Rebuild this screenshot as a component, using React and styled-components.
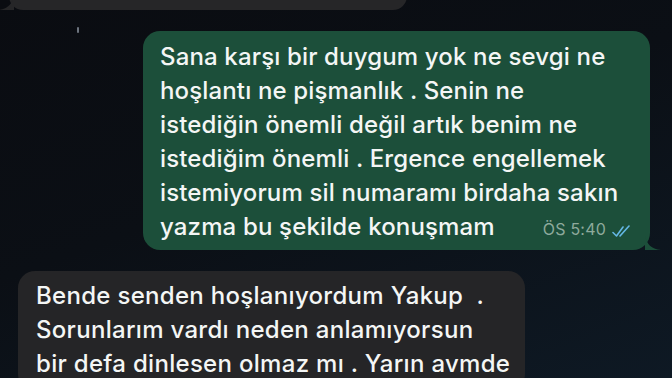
import styled, { createGlobalStyle } from 'styled-components';

const GlobalStyle = createGlobalStyle`
  html, body {
    margin: 0;
    padding: 0;
    background: #0b0e13;
  }
  body {
    font-family: Inter, "Noto Sans", "Liberation Sans", sans-serif;
    -webkit-font-smoothing: antialiased;
  }
`;

const Screen = styled.div`
  width: 672px;
  height: 378px;
  overflow: hidden;
  display: flex;
  flex-direction: column;
  background: linear-gradient(160deg, #0a0c11 0%, #0b0f15 45%, #0e1924 100%);
  position: relative;
`;

const Star = styled.span`
  position: absolute;
  left: 77px;
  top: 27px;
  width: 2px;
  height: 6px;
  border-radius: 2px;
  background: rgba(190, 200, 215, 0.55);
  filter: blur(0.6px);
`;

const Bubble = styled.div`
  position: relative;
  flex-shrink: 0;
  box-sizing: border-box;
  width: 507px;
  border-radius: 17px;
  color: #f4f6f5;
  font-size: 24px;
  font-weight: 500;
  line-height: 34px;
  letter-spacing: 0.15px;
  white-space: nowrap;
  background: ${(p) => (p.$out ? '#1c4f3a' : '#252527')};
  align-self: ${(p) => (p.$out ? 'flex-end' : 'flex-start')};
  margin: ${(p) => (p.$out ? '0 22px 0 0' : '0 0 0 18px')};
  padding: ${(p) => (p.$out ? '9px 18px 4px 17px' : '8px 18px 10px 18px')};

  &::after {
    content: '';
    position: absolute;
    bottom: 0;
    width: 16px;
    height: 14px;
    background: inherit;
    ${(p) =>
      p.$out
        ? 'right: -11px; clip-path: path("M0 0 C2 8 6 13 16 14 L0 14 Z");'
        : 'left: -11px; clip-path: path("M16 0 C14 8 10 13 0 14 L16 14 Z");'}
  }
`;

const TopBubble = styled(Bubble)`
  width: 398px;
  height: 40px;
  margin-top: -30px;
  margin-left: 9px;
  margin-bottom: 21px;
  border-radius: 14px;
  background: #262628;
`;

const BottomBubble = styled(Bubble)`
  margin-top: 21px;
  letter-spacing: 0.3px;
`;

const LastLine = styled.div`
  display: flex;
  align-items: baseline;
  justify-content: space-between;
`;

const Meta = styled.span`
  display: inline-flex;
  align-items: baseline;
  gap: 6px;
  font-size: 16px;
  font-weight: 400;
  letter-spacing: 0.2px;
  color: #8eaa9c;

  svg {
    align-self: center;
    margin-top: 4px;
  }
`;

const Ticks = () => (
  <svg width="20" height="13" viewBox="0 0 20 13" fill="none">
    <path d="M1 7.5 L4.5 11 L11 2" stroke="#64b7e4" strokeWidth="1.6" strokeLinecap="round" strokeLinejoin="round" />
    <path d="M8 11 L17 1" stroke="#64b7e4" strokeWidth="1.6" strokeLinecap="round" strokeLinejoin="round" />
  </svg>
);

export default function App() {
  return (
    <>
      <GlobalStyle />
      <Screen>
        <Star />
        <TopBubble />
        <Bubble $out>
          Sana karşı bir duygum yok ne sevgi ne<br />
          hoşlantı ne pişmanlık . Senin ne<br />
          istediğin önemli değil artık benim ne<br />
          istediğim önemli . Ergence engellemek<br />
          istemiyorum sil numaramı birdaha sakın
          <LastLine>
            <span>yazma bu şekilde konuşmam</span>
            <Meta>
              ÖS 5:40 <Ticks />
            </Meta>
          </LastLine>
        </Bubble>
        <BottomBubble>
          Bende senden hoşlanıyordum Yakup&nbsp; .<br />
          Sorunlarım vardı neden anlamıyorsun<br />
          bir defa dinlesen olmaz mı . Yarın avmde
        </BottomBubble>
      </Screen>
    </>
  );
}
